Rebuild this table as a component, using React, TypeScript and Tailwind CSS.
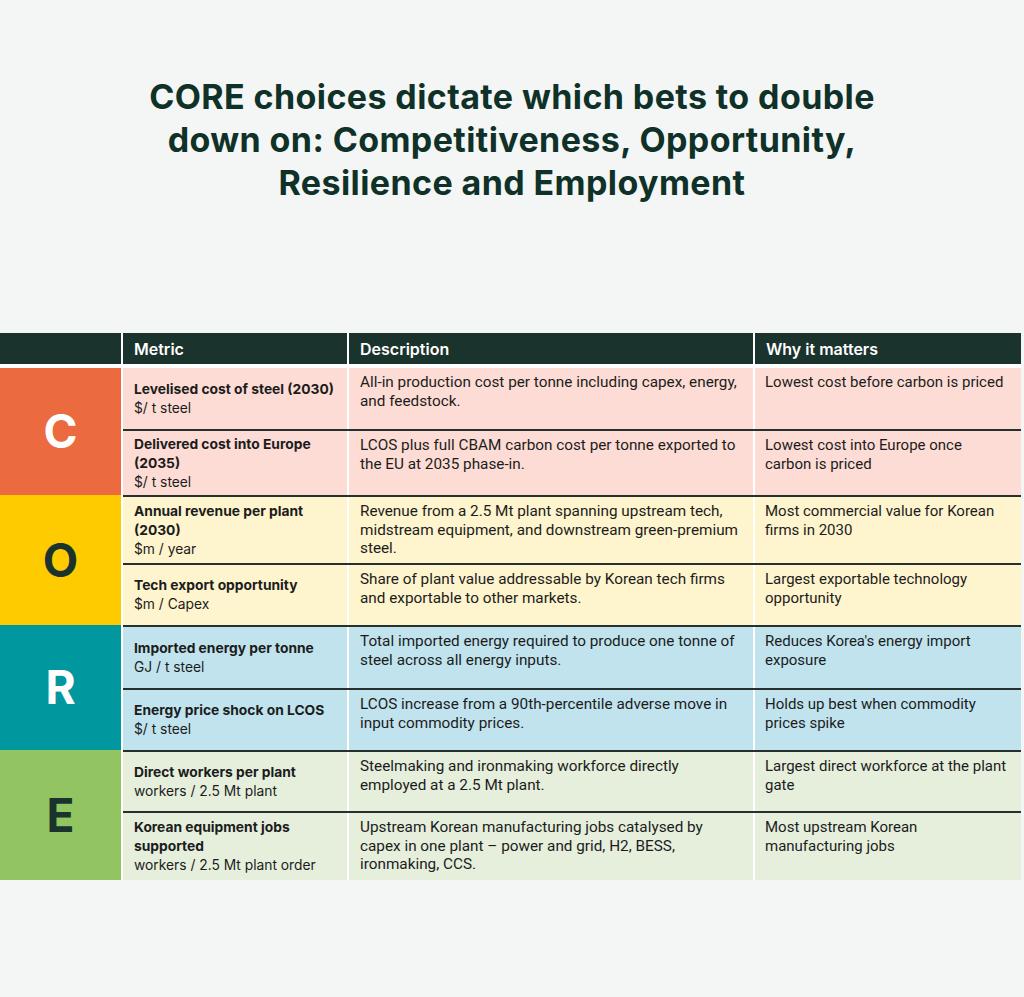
import React from 'react';

interface Row {
  metric: string;
  unit: string;
  description: string;
  why: string;
  height: string;
}

interface Group {
  letter: string;
  letterBg: string;
  letterColor: string;
  rowBg: string;
  rows: Row[];
}

const groups: Group[] = [
  {
    letter: 'C',
    letterBg: 'bg-[#ec6a3f]',
    letterColor: 'text-white',
    rowBg: 'bg-[#fcdcd4]',
    rows: [
      {
        metric: 'Levelised cost of steel (2030)',
        unit: '$/ t steel',
        description: 'All-in production cost per tonne including capex, energy, and feedstock.',
        why: 'Lowest cost before carbon is priced',
        height: 'h-[61px]',
      },
      {
        metric: 'Delivered cost into Europe (2035)',
        unit: '$/ t steel',
        description: 'LCOS plus full CBAM carbon cost per tonne exported to the EU at 2035 phase-in.',
        why: 'Lowest cost into Europe once carbon is priced',
        height: 'h-[66px]',
      },
    ],
  },
  {
    letter: 'O',
    letterBg: 'bg-[#fecb00]',
    letterColor: 'text-[#1b332d]',
    rowBg: 'bg-[#fef4cd]',
    rows: [
      {
        metric: 'Annual revenue per plant (2030)',
        unit: '$m / year',
        description:
          'Revenue from a 2.5 Mt plant spanning upstream tech, midstream equipment, and downstream green-premium steel.',
        why: 'Most commercial value for Korean firms in 2030',
        height: 'h-[68px]',
      },
      {
        metric: 'Tech export opportunity',
        unit: '$m / Capex',
        description: 'Share of plant value addressable by Korean tech firms and exportable to other markets.',
        why: 'Largest exportable technology opportunity',
        height: 'h-[62px]',
      },
    ],
  },
  {
    letter: 'R',
    letterBg: 'bg-[#00989e]',
    letterColor: 'text-white',
    rowBg: 'bg-[#c0e3ee]',
    rows: [
      {
        metric: 'Imported energy per tonne',
        unit: 'GJ / t steel',
        description: 'Total imported energy required to produce one tonne of steel across all energy inputs.',
        why: "Reduces Korea's energy import exposure",
        height: 'h-[63px]',
      },
      {
        metric: 'Energy price shock on LCOS',
        unit: '$/ t steel',
        description: 'LCOS increase from a 90th-percentile adverse move in input commodity prices.',
        why: 'Holds up best when commodity prices spike',
        height: 'h-[62px]',
      },
    ],
  },
  {
    letter: 'E',
    letterBg: 'bg-[#92c462]',
    letterColor: 'text-[#1b332d]',
    rowBg: 'bg-[#e5efdc]',
    rows: [
      {
        metric: 'Direct workers per plant',
        unit: 'workers / 2.5 Mt plant',
        description: 'Steelmaking and ironmaking workforce directly employed at a 2.5 Mt plant.',
        why: 'Largest direct workforce at the plant gate',
        height: 'h-[61px]',
      },
      {
        metric: 'Korean equipment jobs supported',
        unit: 'workers / 2.5 Mt plant order',
        description:
          'Upstream Korean manufacturing jobs catalysed by capex in one plant – power and grid, H2, BESS, ironmaking, CCS.',
        why: 'Most upstream Korean manufacturing jobs',
        height: 'h-[69px]',
      },
    ],
  },
];

const inter = "font-['Inter',sans-serif]";
const narrow = "font-['Roboto',sans-serif]";

export default function App() {
  return (
    <div className="min-h-[997px] w-[1024px] bg-[#f3f6f5] pt-[75px]">
      <h1
        className={`${inter} text-center text-[34px] font-bold leading-[43px] tracking-[0.4px] text-[#0f3128]`}
      >
        CORE choices dictate which bets to double
        <br />
        down on: Competitiveness, Opportunity,
        <br />
        Resilience and Employment
      </h1>

      <div className="mt-[129px] w-[1021px] bg-white">
        {/* ヘッダー */}
        <div className="grid h-[31px] grid-cols-[121px_224px_404px_266px] gap-x-[2px]">
          <div className="bg-[#1b332d]" />
          {['Metric', 'Description', 'Why it matters'].map((h) => (
            <div
              key={h}
              className={`${inter} flex items-center bg-[#1b332d] px-[11px] text-[16px] font-semibold text-white`}
            >
              {h}
            </div>
          ))}
        </div>

        <div className="mt-[4px]">
          {groups.map((group, gi) => (
            <div key={group.letter} className="flex">
              <div
                className={`${inter} ${group.letterBg} ${group.letterColor} flex w-[121px] shrink-0 items-center justify-center text-[46px] font-bold`}
              >
                {group.letter}
              </div>
              <div className="ml-[2px] flex-1">
                {group.rows.map((row, ri) => (
                  <div
                    key={row.metric}
                    className={`${row.height} grid grid-cols-[224px_404px_266px] gap-x-[2px] ${
                      gi === 0 && ri === 0 ? '' : 'border-t-2 border-[#26302c]'
                    }`}
                  >
                    <div
                      className={`${inter} ${group.rowBg} flex flex-col justify-center pl-[11px] pr-[5px] text-[13.8px] leading-[19px] text-[#1c1c1c]`}
                    >
                      <span className="font-bold">{row.metric}</span>
                      <span>{row.unit}</span>
                    </div>
                    <div
                      className={`${narrow} ${group.rowBg} pl-[11px] pr-[8px] pt-[5px] text-[15.3px] leading-[18.5px] text-[#1c1c1c]`}
                    >
                      {row.description}
                    </div>
                    <div
                      className={`${narrow} ${group.rowBg} pl-[10px] pr-[12px] pt-[5px] text-[15px] leading-[18.5px] text-[#1c1c1c]`}
                    >
                      {row.why}
                    </div>
                  </div>
                ))}
              </div>
            </div>
          ))}
        </div>
      </div>
    </div>
  );
}
